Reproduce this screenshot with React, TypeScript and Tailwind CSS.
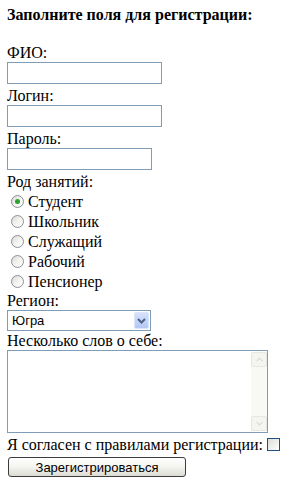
import React from "react";

function Radio({ checked }: { checked?: boolean }) {
  return (
    <span className="ml-[4px] mr-[4px] flex h-[13px] w-[13px] items-center justify-center rounded-full border border-[#8b9097] bg-gradient-to-br from-[#dcdcd6] via-[#f2f2ee] to-white">
      {checked && <span className="h-[5px] w-[5px] rounded-full bg-[#2fa12f]" />}
    </span>
  );
}

function Chevron({ up, color, w = 7 }: { up?: boolean; color: string; w?: number }) {
  return (
    <svg width={w} height={w * 0.6 + 1} viewBox="0 0 10 6" className="block">
      <polyline
        points={up ? "1,5 5,1 9,5" : "1,1 5,5 9,1"}
        fill="none"
        stroke={color}
        strokeWidth={up ? 1.3 : 1.3}
      />
    </svg>
  );
}

export default function App() {
  const jobs = ["Студент", "Школьник", "Служащий", "Рабочий", "Пенсионер"];
  return (
    <div className="min-h-[484px] w-[288px] bg-white pl-[7px] pt-[5px] font-['Liberation_Serif',serif] text-[16px] leading-[19px] text-black">
      <div className="h-[19px] font-bold">Заполните поля для регистрации:</div>
      <div className="h-[19px]" />
      <div className="h-[19px]">ФИО:</div>
      <input className="mb-[2px] block h-[22px] w-[155px] border border-[#7f9db9] bg-white outline-none" />
      <div className="h-[19px]">Логин:</div>
      <input className="mb-[2px] block h-[22px] w-[155px] border border-[#7f9db9] bg-white outline-none" />
      <div className="h-[19px]">Пароль:</div>
      <input
        type="password"
        className="mb-[2px] block h-[22px] w-[145px] border border-[#7f9db9] bg-white outline-none"
      />
      <div className="h-[19px]">Род занятий:</div>
      {jobs.map((j, i) => (
        <div key={j} className="flex h-[20px] items-center">
          <Radio checked={i === 0} />
          <span>{j}</span>
        </div>
      ))}
      <div className="h-[19px]">Регион:</div>
      <div className="flex h-[21px] w-[144px] items-center border border-[#7f9db9] bg-white">
        <span className="flex-1 pl-[4px] font-['Liberation_Sans',sans-serif] text-[13px] leading-[15px]">Югра</span>
        <span className="mr-[1px] flex h-[17px] w-[15px] items-center justify-center rounded-[2px] border border-[#dbe4f8] bg-gradient-to-b from-[#d6e1fc] to-[#b3c7f5]">
          <svg width="9" height="6" viewBox="0 0 9 6" className="block">
            <polyline points="1,1 4.5,4.5 8,1" fill="none" stroke="#4d6185" strokeWidth="2" />
          </svg>
        </span>
      </div>
      <div className="h-[19px]">Несколько слов о себе:</div>
      <div className="flex h-[83px] w-[261px] border border-[#7f9db9] bg-white">
        <div className="flex-1" />
        <div className="my-[1px] mr-[0px] flex w-[16px] flex-col bg-[#f8f8f5]">
          <div className="flex h-[15px] items-center justify-center rounded-[2px] border border-[#e6e6e2] bg-[#f4f4f1]">
            <Chevron up color="#c4c4c0" />
          </div>
          <div className="flex-1" />
          <div className="flex h-[15px] items-center justify-center rounded-[2px] border border-[#e6e6e2] bg-[#f4f4f1]">
            <Chevron color="#c4c4c0" />
          </div>
        </div>
      </div>
      <div className="mt-[2px] flex h-[19px] items-center">
        <span>Я согласен с правилами регистрации:</span>
        <span className="ml-[4px] h-[13px] w-[13px] border border-[#1c5180] bg-gradient-to-br from-[#dcdcd7] to-white" />
      </div>
      <button className="ml-[1px] mt-[3px] flex h-[20px] w-[178px] items-center justify-center rounded-[3px] border border-[#3c3c3c] bg-gradient-to-b from-white via-[#f4f4f0] to-[#dcdcd4] font-['Liberation_Sans',sans-serif] text-[13px] leading-[15px] text-black">
        Зарегистрироваться
      </button>
    </div>
  );
}
